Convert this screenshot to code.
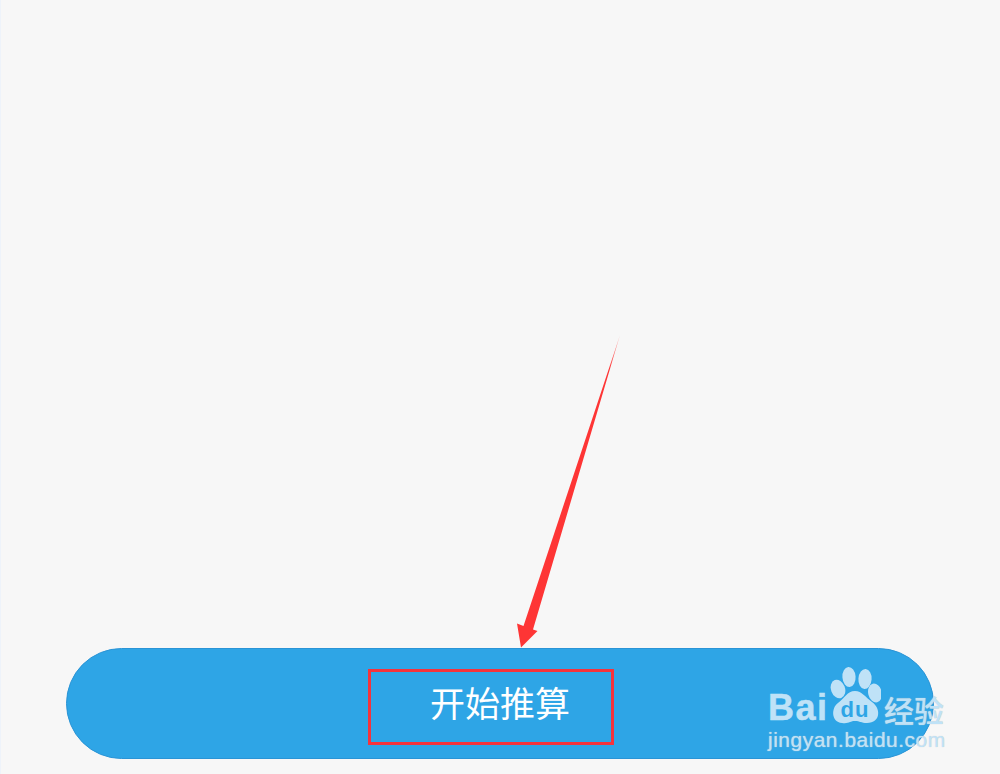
<div class="page">
  <button class="start"><span class="label">开始推算</span></button>

  <div class="callout"></div>

  <svg class="arrow" width="130" height="330" viewBox="500 330 130 330" aria-hidden="true">
    <defs>
      <linearGradient id="fade" gradientUnits="userSpaceOnUse" x1="619.5" y1="335" x2="609" y2="370">
        <stop offset="0" stop-color="#fe3535" stop-opacity="0.4" />
        <stop offset="1" stop-color="#fe3535" />
      </linearGradient>
    </defs>
    <path d="M620 335 L533 629.5 L537.5 631 L521 647.5 L517 623.5 L523.5 626 Z" fill="url(#fade)" />
  </svg>

  <div class="mark">
    <div class="logo-row">
      <span class="bai">Bai</span>
      <svg class="paw" width="52" height="58" viewBox="0 0 52 58" aria-hidden="true">
        <ellipse cx="9" cy="23" rx="7" ry="9.5" transform="rotate(-20 9 23)" />
        <ellipse cx="20" cy="11" rx="6.6" ry="10" transform="rotate(-4 20 11)" />
        <ellipse cx="36" cy="13" rx="6.6" ry="10" transform="rotate(4 36 13)" />
        <ellipse cx="46" cy="27" rx="6.8" ry="9.5" transform="rotate(-14 46 27)" />
        <path d="M26 25 C33 25 36 31 43 36 C52 42 52 57 38 57 C32 57 31 55 26 55 C21 55 20 58 13 57 C2 56 2 42 9 37 C16 32 18 25 26 25 Z" />
        <text class="du" x="26" y="51">du</text>
      </svg>
      <span class="jy">经验</span>
    </div>
    <div class="url">jingyan.baidu.com</div>
  </div>
</div>

<style>
  :global(body) {
    margin: 0;
  }

  .page {
    position: relative;
    box-sizing: border-box;
    width: 1000px;
    height: 774px;
    overflow: hidden;
    display: flex;
    flex-direction: column;
    justify-content: flex-end;
    align-items: center;
    padding-bottom: 15px;
    background: #f7f7f7;
    border-left: 1px solid #eef3fa;
    font-family: "Noto Sans CJK SC", "Liberation Sans", sans-serif;
  }

  .start {
    width: 868px;
    height: 111px;
    margin-left: -1px;
    padding: 0 0 4px;
    border: 1px solid #2a94d6;
    border-radius: 56px;
    background: #2ea5e6;
    color: #fff;
    font-family: inherit;
    font-size: 35px;
    font-weight: 400;
  }

  .callout {
    position: absolute;
    left: 367px;
    top: 669px;
    box-sizing: border-box;
    width: 246px;
    height: 76px;
    border: 3px solid #f5333c;
  }

  .arrow {
    position: absolute;
    left: 499px;
    top: 330px;
  }

  .mark {
    position: absolute;
    left: 767px;
    top: 666px;
    color: #bfe2f7;
    pointer-events: none;
  }

  .logo-row {
    display: flex;
    align-items: flex-end;
    height: 58px;
  }

  .bai {
    width: 61px;
    font-family: "Liberation Sans", sans-serif;
    font-weight: 700;
    font-size: 36px;
    line-height: 30px;
    letter-spacing: 1.5px;
    margin-bottom: 1px;
    -webkit-text-stroke: 0.5px #bfe2f7;
  }

  .paw {
    fill: #bfe2f7;
    flex: none;
  }

  .du {
    fill: #2ea5e6;
    font-family: "Liberation Sans", sans-serif;
    font-weight: 700;
    font-size: 22px;
    letter-spacing: 1px;
    text-anchor: middle;
  }

  .jy {
    font-size: 30px;
    line-height: 30px;
    font-weight: 500;
    margin: 0 0 0 3px;
    white-space: nowrap;
    text-shadow: 0 0 1px #c9c9c9;
  }

  .url {
    font-family: "Liberation Sans", sans-serif;
    font-size: 21px;
    line-height: 24px;
    letter-spacing: 0.5px;
    margin-top: 4px;
    white-space: nowrap;
    text-shadow: 0 0 1px #cfcfcf;
  }
</style>
